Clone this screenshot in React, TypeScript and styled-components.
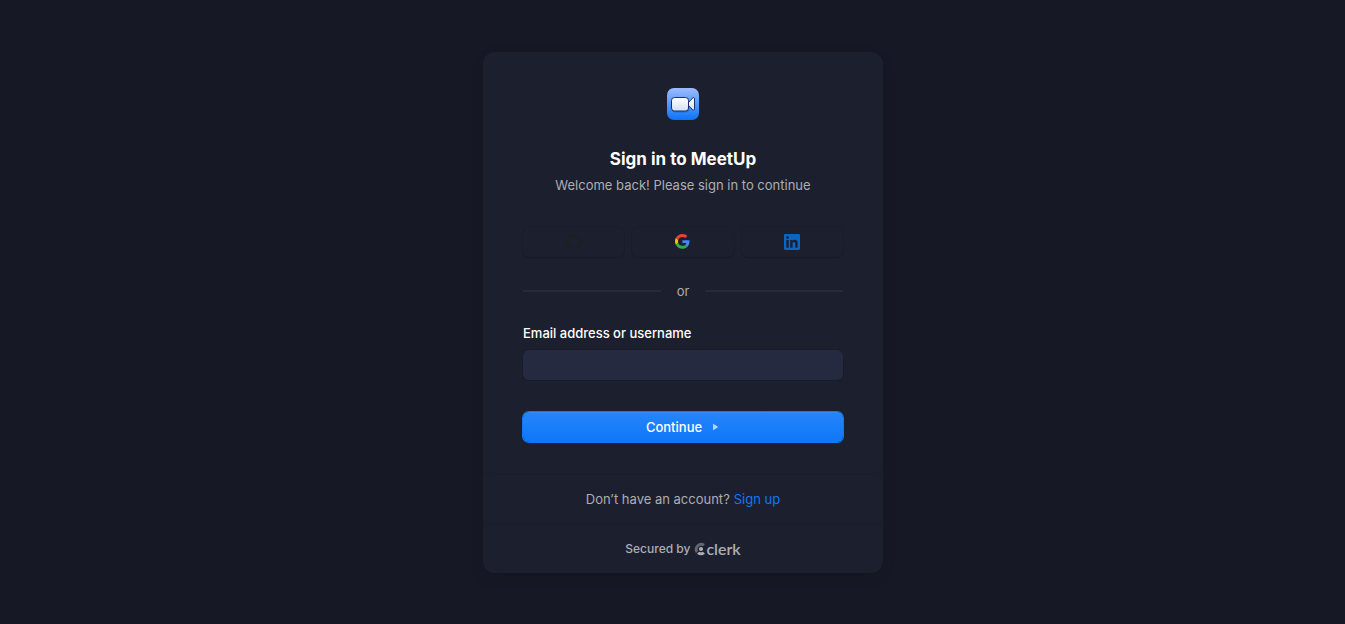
import React from "react";
import styled, { createGlobalStyle } from "styled-components";

const GlobalStyle = createGlobalStyle`
  *, *::before, *::after { box-sizing: border-box; }
  body {
    margin: 0;
    background: #161925;
    color: #ffffff;
    font-family: Inter, "Liberation Sans", sans-serif;
    font-size: 13px;
    line-height: 18px;
  }
`;

const Page = styled.main`
  min-height: 100vh;
  display: flex;
  align-items: center;
  justify-content: center;
  padding: 21px 0 20px 21px;
`;

const Card = styled.section`
  width: 400px;
  max-width: 100%;
  border-radius: 12px;
  background: #1c1f2e;
  box-shadow: 0 5px 15px rgba(0, 0, 0, 0.08);
`;

const Panel = styled.div`
  display: flex;
  flex-direction: column;
  padding: 36px 40px 31px;
  border-radius: 8px;
  box-shadow: 0 1px 1px rgba(0, 0, 0, 0.06);
`;

const Header = styled.header`
  display: flex;
  flex-direction: column;
  align-items: center;
  text-align: center;
`;

const Title = styled.h1`
  margin: 27px 0 5px;
  font-size: 17px;
  line-height: 24px;
  font-weight: 700;
`;

const Muted = styled.p`
  margin: 0;
  color: #adaeb3;
`;

const Secured = styled(Muted)`
  font-size: 12px;
  font-weight: 500;
`;

const SocialRow = styled.div`
  display: grid;
  grid-template-columns: repeat(3, 1fr);
  gap: 8px;
  margin-top: 33px;
`;

const SocialButton = styled.button`
  display: flex;
  align-items: center;
  justify-content: center;
  height: 30px;
  padding: 0;
  border: 0;
  border-radius: 6px;
  background: transparent;
  box-shadow: 0 0 0 1px rgba(0, 0, 0, 0.05), 0 1px 1px rgba(0, 0, 0, 0.08);
  cursor: pointer;
`;

const Divider = styled.div`
  display: flex;
  align-items: center;
  gap: 16px;
  margin: 25px 0 24px;
  color: #adaeb3;
  &::before, &::after {
    content: "";
    flex: 1;
    height: 2px;
    background: #252a41;
  }
`;

const Form = styled.form`
  display: flex;
  flex-direction: column;
`;

const Label = styled.label`
  font-weight: 500;
`;

const Input = styled.input`
  height: 30px;
  margin-top: 8px;
  padding: 6px 12px;
  border: 0;
  border-radius: 6px;
  background: #252a41;
  color: #ffffff;
  font: inherit;
  box-shadow: 0 0 0 1px rgba(0, 0, 0, 0.08);
`;

const Submit = styled.button`
  display: flex;
  align-items: center;
  justify-content: center;
  gap: 8px;
  height: 30px;
  margin-top: 32px;
  padding: 0;
  border: 0;
  border-radius: 6px;
  background: linear-gradient(#2684fa, #0e78f9);
  color: #ffffff;
  font: inherit;
  font-weight: 500;
  box-shadow: 0 0 0 1px #0e78f9, inset 0 1px 1px rgba(255, 255, 255, 0.07);
  cursor: pointer;
`;

const FooterRow = styled.div<{ $last?: boolean }>`
  display: flex;
  align-items: center;
  justify-content: center;
  gap: 4px;
  padding: ${(p) => (p.$last ? 15 : 16)}px 0;
  border-top: 1px solid #1a1d2b;
`;

const Link = styled.a`
  color: #0e78f9;
  text-decoration: none;
`;

const Brand = styled.a`
  display: flex;
  align-items: center;
  color: #adaeb3;
  font-family: Lato, sans-serif;
  font-size: 16px;
  line-height: 16px;
  font-weight: 600;
  text-decoration: none;
`;

const MeetLogo = () => (
  <svg width="32" height="32" viewBox="0 0 32 32" role="img" aria-label="MeetUp">
    <defs>
      <linearGradient id="tile" x1="0" y1="0" x2="0" y2="1">
        <stop offset="0" stopColor="#9dbcff" />
        <stop offset="1" stopColor="#0b74f8" />
      </linearGradient>
      <linearGradient id="camera" x1="0" y1="0" x2="0" y2="1">
        <stop offset="0" stopColor="#ffffff" />
        <stop offset="1" stopColor="#d5dff8" />
      </linearGradient>
    </defs>
    <rect width="32" height="32" rx="7" fill="url(#tile)" />
    <rect x="5" y="11.500" width="17" height="13" rx="3" fill="#0f4fb8" opacity="0.45" />
    <g fill="url(#camera)" stroke="#1a2f66" strokeWidth="1">
      <path d="M21.200 14.300Q23.700 12.800 25.200 10.400Q27.500 8.600 27.500 11V20.800Q27.500 23.200 25.200 21.400Q23.700 19 21.200 17.700Z" />
      <rect x="4.500" y="9.500" width="17" height="13.500" rx="3" />
    </g>
  </svg>
);

const GitHubIcon = () => (
  <svg width="16" height="16" viewBox="0 0 16 16" fill="#1c2025" aria-hidden="true">
    <path d="M8 0C3.580 0 0 3.580 0 8c0 3.540 2.290 6.530 5.470 7.590.4.070.55-.17.55-.38 0-.19-.01-.82-.01-1.490-2.010.37-2.530-.49-2.690-.94-.09-.23-.48-.94-.82-1.130-.28-.15-.68-.52-.01-.53.63-.01 1.080.58 1.230.82.72 1.210 1.870.87 2.330.66.07-.52.28-.87.51-1.070-1.780-.2-3.640-.89-3.640-3.950 0-.87.31-1.590.82-2.150-.08-.2-.36-1.020.08-2.120 0 0 .67-.21 2.200.82a7.600 7.600 0 0 1 4 0c1.530-1.040 2.200-.82 2.200-.82.44 1.100.16 1.920.08 2.120.51.56.82 1.270.82 2.150 0 3.070-1.870 3.750-3.650 3.950.29.25.54.73.54 1.480 0 1.070-.01 1.930-.01 2.200 0 .21.15.46.55.38A8.010 8.010 0 0 0 16 8c0-4.420-3.580-8-8-8Z" />
  </svg>
);

const GoogleIcon = () => (
  <svg width="16" height="16" viewBox="0 0 52 52" aria-hidden="true">
    <path fill="#EA4335" d="M24 9.500c3.540 0 6.710 1.220 9.210 3.600l6.850-6.850C35.900 2.380 30.470 0 24 0 14.620 0 6.510 5.380 2.560 13.220l7.980 6.190C12.430 13.720 17.740 9.500 24 9.500z" />
    <path fill="#4285F4" d="M46.980 24.550c0-1.570-.15-3.090-.38-4.550H24v9.020h12.940c-.58 2.960-2.260 5.480-4.780 7.180l7.730 6c4.510-4.180 7.090-10.360 7.090-17.650z" />
    <path fill="#FBBC05" d="M10.530 28.590A14.500 14.500 0 0 1 9.770 24c0-1.600.27-3.140.76-4.590l-7.980-6.190A23.900 23.900 0 0 0 0 24c0 3.880.92 7.540 2.560 10.780l7.970-6.190z" />
    <path fill="#34A853" d="M24 48c6.480 0 11.930-2.130 15.890-5.810l-7.730-6c-2.150 1.450-4.920 2.300-8.160 2.300-6.260 0-11.570-4.220-13.470-9.910l-7.980 6.190C6.510 42.620 14.620 48 24 48z" />
  </svg>
);

const LinkedInIcon = () => (
  <svg width="16" height="16" viewBox="0 0 16 16" fill="#0a66c2" aria-hidden="true">
    <path d="M14.820 0H1.180A1.170 1.170 0 0 0 0 1.150v13.700A1.170 1.170 0 0 0 1.180 16h13.640A1.170 1.170 0 0 0 16 14.850V1.150A1.170 1.170 0 0 0 14.820 0ZM4.750 13.630H2.370V6h2.380ZM3.560 4.950a1.380 1.380 0 1 1 0-2.760 1.380 1.380 0 0 1 0 2.760Zm10.070 8.680h-2.370V9.920c0-.88-.02-2.020-1.230-2.020-1.240 0-1.430.96-1.430 1.960v3.770H6.230V6h2.280v1.040h.03a2.500 2.500 0 0 1 2.250-1.230c2.410 0 2.850 1.580 2.850 3.640Z" />
  </svg>
);

const ArrowIcon = () => (
  <svg width="10" height="10" viewBox="0 0 10 10" aria-hidden="true">
    <path d="M3 2.200v5.600c0 .3.300.5.600.300l4-2.700a.5.5 0 0 0 0-.8l-4-2.700c-.3-.2-.6 0-.6.300Z" fill="#b0d2fd" />
  </svg>
);

const ClerkMark = () => (
  <svg width="12" height="14" viewBox="0 0 12 14" fill="#adaeb3" aria-hidden="true">
    <circle cx="7" cy="7" r="2.100" />
    <path d="M10.700 11.500a.4.4 0 0 1 0 .6A6.600 6.600 0 0 1 3.300 12.100a.4.400 0 0 1 0-.6l1.500-1.500a.5.500 0 0 1 .6-.1 3.500 3.500 0 0 0 3.200 0 .5.500 0 0 1 .6.100Z" />
    <path opacity="0.5" d="M10.700 1.900a.4.400 0 0 1 0 .6L9.200 4a.5.500 0 0 1-.6.100A3.500 3.500 0 0 0 3.900 8.700a.5.500 0 0 1-.1.500L2.300 10.700a.4.400 0 0 1-.6 0A6.500 6.500 0 0 1 10.700 1.900Z" />
  </svg>
);

export default function App() {
  return (
    <>
      <GlobalStyle />
      <Page>
        <Card>
          <Panel>
            <Header>
              <MeetLogo />
              <Title>Sign in to MeetUp</Title>
              <Muted>Welcome back! Please sign in to continue</Muted>
            </Header>
            <SocialRow>
              <SocialButton type="button" aria-label="Sign in with GitHub"><GitHubIcon /></SocialButton>
              <SocialButton type="button" aria-label="Sign in with Google"><GoogleIcon /></SocialButton>
              <SocialButton type="button" aria-label="Sign in with LinkedIn"><LinkedInIcon /></SocialButton>
            </SocialRow>
            <Divider>or</Divider>
            <Form onSubmit={(e) => e.preventDefault()}>
              <Label htmlFor="identifier">Email address or username</Label>
              <Input id="identifier" name="identifier" type="text" autoComplete="username" />
              <Submit type="submit">
                Continue
                <ArrowIcon />
              </Submit>
            </Form>
          </Panel>
          <FooterRow>
            <Muted>Don’t have an account?</Muted>
            <Link href="#sign-up">Sign up</Link>
          </FooterRow>
          <FooterRow $last>
            <Secured>Secured by</Secured>
            <Brand href="#clerk">
              <ClerkMark />
              clerk
            </Brand>
          </FooterRow>
        </Card>
      </Page>
    </>
  );
}
